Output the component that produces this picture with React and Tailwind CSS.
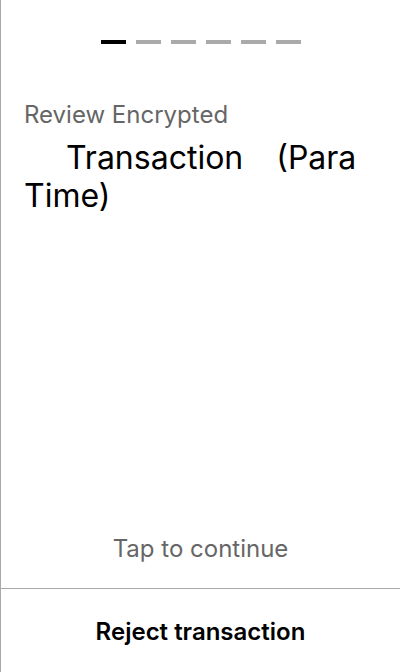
export default function App() {
  const bars = [0, 1, 2, 3, 4, 5];
  return (
    <div className="h-[672px] w-[400px] bg-white border-l border-[#aaaaaa] flex flex-col" style={{ fontFamily: "Inter, 'Noto Sans', sans-serif" }}>
      <div className="flex justify-center gap-[10px] pt-[40px]">
        {bars.map((i) => (
          <div key={i} className={i === 0 ? "w-[25px] h-[4px] bg-black" : "w-[25px] h-[4px] bg-[#aaaaaa]"} />
        ))}
      </div>
      <div className="px-[23px] pt-[57px]">
        <div className="text-[24px] leading-[28px] text-[#666666]">Review Encrypted</div>
        <div className="mt-[10px] text-[32px] leading-[38px] text-black">
          <div className="flex pl-[42px] gap-[33px]">
            <span>Transaction</span>
            <span>(Para</span>
          </div>
          <div>Time)</div>
        </div>
      </div>
      <div className="flex-1" />
      <div className="text-center text-[24px] leading-[28px] text-[#666666] pb-[25px]">Tap to continue</div>
      <div className="h-[1px] bg-[#aaaaaa]" />
      <div className="h-[83px] pt-[29px] text-center text-[24px] leading-[28px] font-semibold text-black">Reject transaction</div>
    </div>
  );
}
